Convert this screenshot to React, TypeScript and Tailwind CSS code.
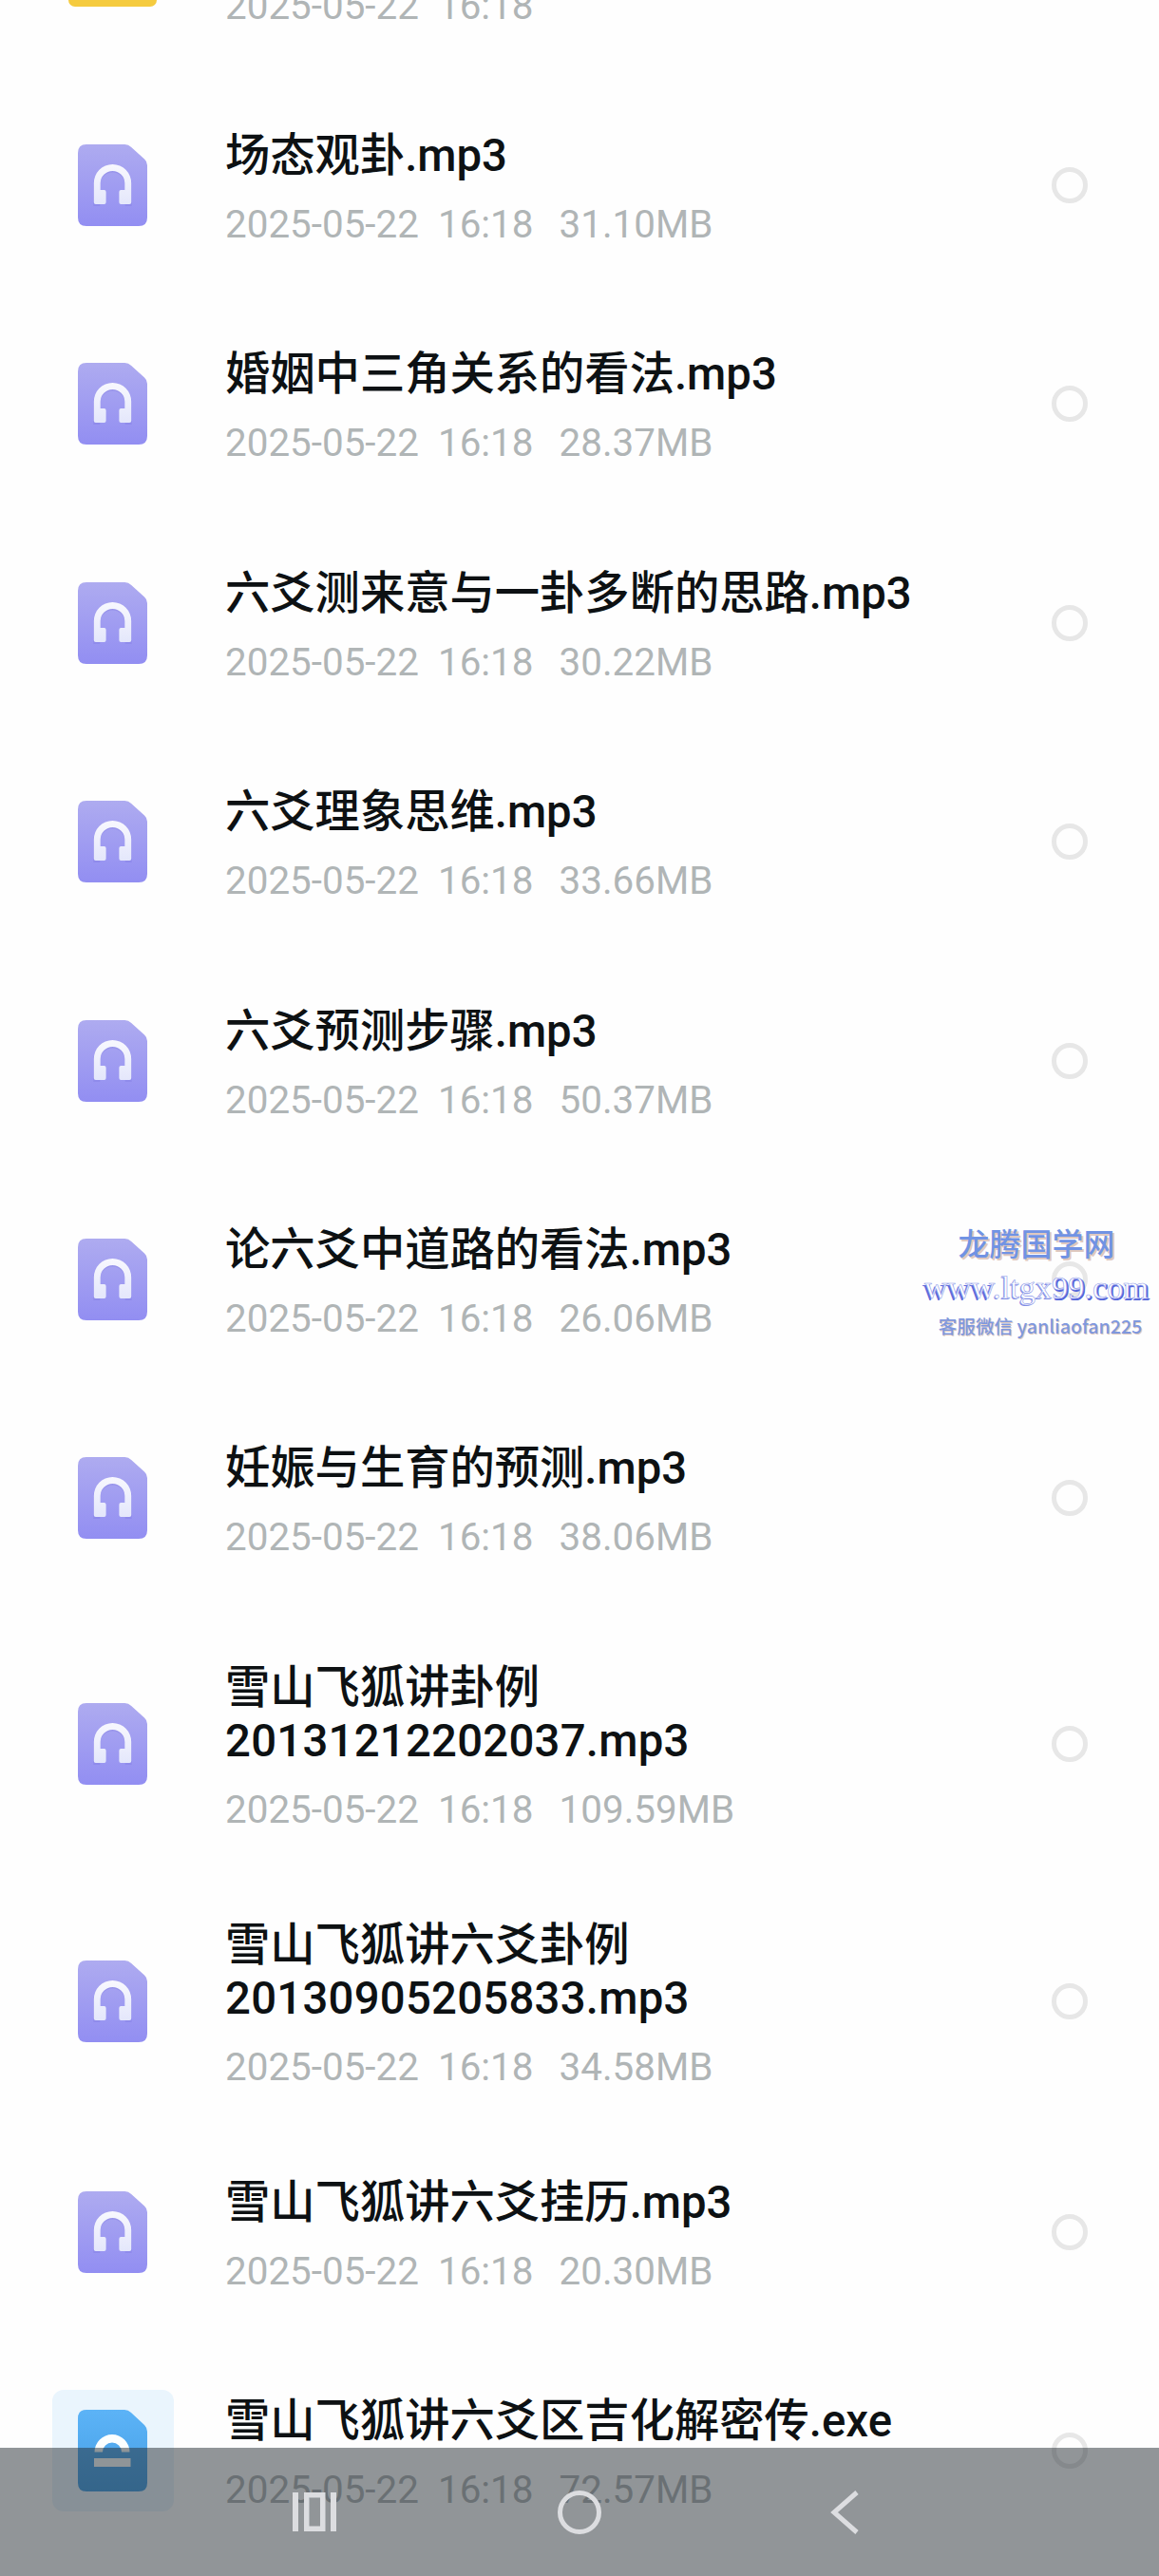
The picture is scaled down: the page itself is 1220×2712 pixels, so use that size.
import type { ReactNode } from "react";

type FileItem = {
  lines: string[];
  size: string;
  kind: "audio" | "exe";
};

const DATE = "2025-05-22";
const TIME = "16:18";

const files: FileItem[] = [
  { lines: ["场态观卦.mp3"], size: "31.10MB", kind: "audio" },
  { lines: ["婚姻中三角关系的看法.mp3"], size: "28.37MB", kind: "audio" },
  { lines: ["六爻测来意与一卦多断的思路.mp3"], size: "30.22MB", kind: "audio" },
  { lines: ["六爻理象思维.mp3"], size: "33.66MB", kind: "audio" },
  { lines: ["六爻预测步骤.mp3"], size: "50.37MB", kind: "audio" },
  { lines: ["论六爻中道路的看法.mp3"], size: "26.06MB", kind: "audio" },
  { lines: ["妊娠与生育的预测.mp3"], size: "38.06MB", kind: "audio" },
  { lines: ["雪山飞狐讲卦例", "20131212202037.mp3"], size: "109.59MB", kind: "audio" },
  { lines: ["雪山飞狐讲六爻卦例", "20130905205833.mp3"], size: "34.58MB", kind: "audio" },
  { lines: ["雪山飞狐讲六爻挂历.mp3"], size: "20.30MB", kind: "audio" },
  { lines: ["雪山飞狐讲六爻区吉化解密传.exe"], size: "72.57MB", kind: "exe" },
];

function AudioIcon() {
  return (
    <svg width="73" height="86" viewBox="0 0 74 86" preserveAspectRatio="none" className="shrink-0">
      <defs>
        <linearGradient id="audio" x1="0" y1="0" x2="0" y2="1">
          <stop offset="0" stopColor="#aeabf0" />
          <stop offset="1" stopColor="#928ef2" />
        </linearGradient>
        <linearGradient id="phones" x1="0" y1="0" x2="0" y2="1">
          <stop offset="0" stopColor="#f8f8fe" />
          <stop offset="1" stopColor="#e4e7fb" />
        </linearGradient>
      </defs>
      <path d="M9 0H50Q54 0 57 3L71 15.500Q74 18 74 22V77Q74 86 65 86H9Q0 86 0 77V9Q0 0 9 0Z" fill="url(#audio)" />
      <path
        d="M20 63V41a17 17 0 0 1 34 0V63"
        transform="translate(0 2)"
        fill="none"
        stroke="#7c74dd"
        strokeOpacity="0.3"
        strokeWidth="7"
      />
      <path
        d="M17 61V41a20 20 0 0 1 40 0V61q0 2-2 2H46q-2 0-2-2V50q0-2 2-2H50V41a13 13 0 0 0-26 0V48H28q2 0 2 2V61q0 2-2 2H19q-2 0-2-2Z"
        fill="url(#phones)"
      />
    </svg>
  );
}

function ExeIcon() {
  return (
    <div className="flex h-32 w-32 shrink-0 items-center justify-center rounded-xl bg-[#eaf5fd]">
      <svg width="73" height="86" viewBox="0 0 73 86">
        <defs>
          <linearGradient id="exe" x1="0" y1="0" x2="0" y2="1">
            <stop offset="0" stopColor="#5cb3f7" />
            <stop offset="1" stopColor="#459fe4" />
          </linearGradient>
        </defs>
        <path d="M9 0H49Q53 0 56 3L70 16Q73 19 73 23V77Q73 86 64 86H9Q0 86 0 77V9Q0 0 9 0Z" fill="url(#exe)" />
        <path d="M17.500 44.500a18.500 18.500 0 0 1 37 0H46a10 10 0 0 0-20 0Z" fill="#fbffff" />
        <rect x="17" y="51" width="38.500" height="9" fill="#fbffff" />
      </svg>
    </div>
  );
}

function Meta({ size }: { size?: string }) {
  return (
    <p className="flex text-[40.4px] leading-[38px] text-[#b0b5b6]">
      <span>{DATE}</span>
      <span className="ml-5">{TIME}</span>
      {size && <span className="ml-[27px]">{size}</span>}
    </p>
  );
}

function Row({ icon, lines, size }: { icon: ReactNode; lines: string[]; size: string }) {
  const tall = lines.length > 1;

  return (
    <li className={tall ? "pb-[95.1px]" : "pb-[110.4px]"}>
      <div className="flex items-center">
        <div className="flex h-0 w-[237px] shrink-0 items-center justify-center">{icon}</div>
        <div className="flex-1 pt-px">
          {lines.map((line, i) => (
            <p
              key={line}
              className={`text-[47.3px] leading-14 font-medium whitespace-nowrap text-[#0d1113] ${i > 0 ? "tracking-[0.25px]" : ""}`}
            >
              {line}
            </p>
          ))}
          <div className="-mb-px pt-[26px]">
            <Meta size={size} />
          </div>
        </div>
        <span className="mr-[75px] h-[38px] w-[38px] shrink-0 rounded-full border-[5px] border-[#e7e7e7]" />
      </div>
    </li>
  );
}

function Watermark() {
  return (
    <div className="absolute top-[1287px] left-[971px] flex w-[240px] flex-col items-center whitespace-nowrap">
      <p className="text-[33px] leading-[48px] font-medium text-[#7193e4] [text-shadow:2px_2px_0_#dfc8bf]">龙腾国学网</p>
      <p className="font-['Liberation_Serif',serif] text-[34.3px] leading-[40px] text-white [-webkit-text-stroke:0.6px_#8f9bea]">
        <span className="[text-shadow:-2px_2px_0_#5f6ddb]">www</span>
        <span className="[text-shadow:-1px_1px_0_#7f8be3]">.ltgx</span>
        <span className="[text-shadow:2px_1px_0_#5565da,1px_2px_0_#5565da]">99.com</span>
      </p>
      <p className="ml-2 font-['Noto_Sans_CJK_SC',sans-serif] text-[19.6px] leading-[41px] font-medium text-[#7f98de] [text-shadow:1px_1px_0_#e0cbc2]">
        客服微信 yanliaofan225
      </p>
    </div>
  );
}

function NavBar() {
  return (
    <nav className="absolute bottom-0 left-0 flex h-[135px] w-full items-center justify-center bg-[#242b31]/50 text-[#dcdde0]">
      <div className="flex w-[279px] justify-center">
        <svg width="46" height="41" viewBox="0 0 46 41" fill="currentColor">
          <rect width="6" height="41" />
          <path fillRule="evenodd" d="M12 0H34.500V41H12ZM17.500 5.500V35.500H29V5.500Z" />
          <rect x="40" width="6" height="41" />
        </svg>
      </div>
      <div className="flex w-[279px] justify-center">
        <span className="h-[46px] w-[46px] rounded-full border-[5px] border-current" />
      </div>
      <div className="flex w-[279px] justify-center">
        <svg width="30" height="46" viewBox="0 0 30 46" fill="none" stroke="currentColor" strokeWidth="5">
          <path d="M28 2L4 23L28 44" />
        </svg>
      </div>
    </nav>
  );
}

export default function App() {
  return (
    <div className="relative h-[2712px] w-[1220px] overflow-hidden bg-[#fefefe] font-[Roboto,'Noto_Sans_CJK_SC',sans-serif]">
      <ul>
        {/* folder row, scrolled almost out of view */}
        <li className="flex h-[135px] items-start">
          <div className="flex w-[237px] shrink-0 justify-center">
            <div className="h-[7px] w-[93px] rounded-b-lg bg-[#f5cb3f]" />
          </div>
          <div className="-mt-[12.4px]">
            <Meta />
          </div>
        </li>
        {files.map((file) => (
          <Row
            key={file.lines.join("")}
            icon={file.kind === "exe" ? <ExeIcon /> : <AudioIcon />}
            lines={file.lines}
            size={file.size}
          />
        ))}
      </ul>
      <Watermark />
      <NavBar />
    </div>
  );
}
